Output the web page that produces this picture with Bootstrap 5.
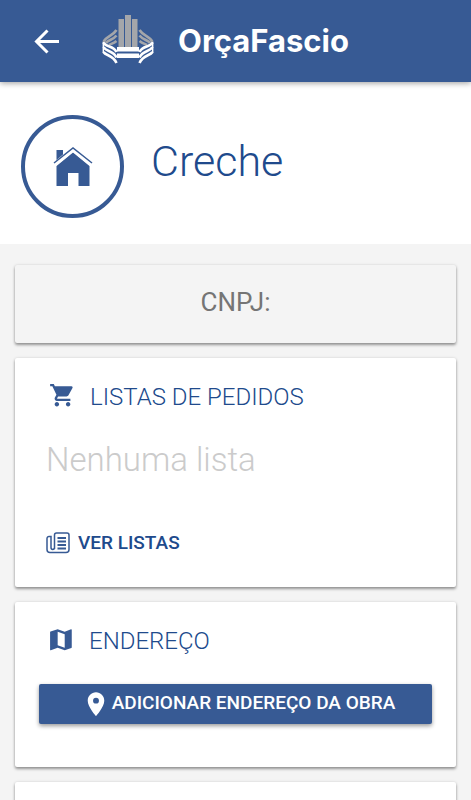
<!DOCTYPE html>
<html lang="pt-BR">
<head>
<meta charset="utf-8">
<meta name="viewport" content="width=device-width, initial-scale=1">
<title>OrçaFascio</title>
<link rel="stylesheet" href="https://cdn.jsdelivr.net/npm/bootstrap@5.3.0/dist/css/bootstrap.min.css">
<style>
:root { --brand: #375a94; --ink: #204a8c; }
body { background: #f4f4f4; font-family: Roboto, "Liberation Sans", sans-serif; overflow-x: hidden; }
svg { display: block; flex: none; }
.topbar { background: var(--brand); height: 82px; padding: 0 32px; box-shadow: 0 1px 6px rgba(0,0,0,.4); position: relative; z-index: 1; }
.back { margin-right: 40px; }
.brand-name { font: 700 31px/40px Inter, "Open Sans", sans-serif; color: #fff; margin-left: 24px; }
.hero { padding: 33px 21px 26px; gap: 27px; }
.hero-ring { width: 103px; height: 103px; border: 4px solid var(--brand); }
.hero h1 { font-size: 43px; line-height: 52px; font-weight: 300; color: var(--ink); margin-bottom: 12px; }
main { padding: 21px 15px; gap: 15px; }
.panel { border: 0; border-radius: 2px; box-shadow: 0 2px 3px rgba(0,0,0,.38), 0 0 3px rgba(0,0,0,.12); padding: 23px 24px 20px; }
.panel-flat { background: #f4f4f4; padding: 19px 24px 23px; }
.doc { font-size: 26px; line-height: 36px; color: #757575; }
.panel h2 { font-size: 24px; line-height: 32px; font-weight: 300; color: var(--ink); gap: 14px; padding-left: 10px; }
.empty { font-size: 33px; line-height: 44px; font-weight: 300; color: #cbcbcb; padding-left: 7px; margin: 25px 0 37px; }
.see { font-size: 19px; line-height: 28px; font-weight: 500; color: var(--ink); gap: 8px; padding: 10px 7px; }
.add { background: var(--brand); color: #fff; border-radius: 2px; height: 40px; font-size: 19px; line-height: 28px; font-weight: 500; gap: 5px; margin: 27px 0 23px; padding: 0 0 3px 9px; box-shadow: 0 2px 4px rgba(0,0,0,.4); }
.add:hover { background: #2d4c80; color: #fff; }
</style>
</head>
<body>
<header class="topbar d-flex align-items-center">
  <button type="button" class="btn border-0 p-0 back" aria-label="Voltar">
    <svg width="30" height="30" viewBox="0 0 30 30" fill="none" stroke="#fff" stroke-width="3"><path d="M27 15.500H5M15.500 4.500L4.500 15.500l11 11"/></svg>
  </button>
  <svg width="52" height="54" viewBox="0 0 52 54" aria-hidden="true">
    <path fill="#a4a6aa" d="M16.500 5h5.500v29h-5.500zM23 1h6v33h-6zM30 5h5.500v29h-5.500z"/>
    <g id="wing">
      <path fill="none" stroke="#a4a6aa" stroke-width="2.600" d="M1.500 28C4 22 11 22 14.500 16M4 29C6 26 11 26 14.500 21.500M7 31C9 30 12 29 14.500 27"/>
      <path fill="none" stroke="#fff" stroke-width="2.600" d="M1.500 28.500C4 34 11 31 14.500 38M1.500 33C4 38 11 36 14.500 43.500M1.500 38C4 42 11 41 14.500 49"/>
      <path stroke="#fff" stroke-width="1.400" d="M1.300 28v11"/>
    </g>
    <use href="#wing" transform="translate(52 0) scale(-1 1)"/>
    <path fill="#fff" d="M15 33h22v4.500H15zM15 39.500h22V44H15z"/>
  </svg>
  <span class="brand-name">OrçaFascio</span>
</header>

<section class="hero bg-white d-flex align-items-center">
  <div class="hero-ring rounded-circle d-flex align-items-center justify-content-center flex-shrink-0">
    <svg width="40" height="40" viewBox="0 0 40 40" aria-hidden="true">
      <path fill="#375a94" d="M3.500 3H10v4.500L3.500 13zM20 5.500L36.500 19v20H25.500V26H15v13H3.500V19z"/>
      <path fill="none" stroke="#fff" stroke-width="3" d="M1 18.500L20 3l19 15.500"/>
      <path fill="none" stroke="#375a94" stroke-width="1.500" d="M1 16L20 1l19 15"/>
    </svg>
  </div>
  <h1>Creche</h1>
</section>

<main class="d-flex flex-column">
  <section class="card panel panel-flat text-center"><div class="doc">CNPJ:</div></section>

  <section class="card panel align-items-start">
    <h2 class="d-flex align-items-center m-0">
      <svg width="27" height="27" viewBox="0 1 24 24" fill="#375a94" aria-hidden="true"><path transform="translate(0 -1)" d="M7 18c-1.100 0-1.990.9-1.990 2S5.900 22 7 22s2-.9 2-2-.9-2-2-2zM1 2v2h2l3.600 7.590-1.350 2.450c-.16.280-.25.610-.25.960 0 1.100.9 2 2 2h12v-2H7.420c-.14 0-.25-.11-.25-.25l.03-.12.900-1.630h7.450c.75 0 1.410-.41 1.750-1.030l3.580-6.490A1 1 0 0 0 20 4H5.210l-.94-2H1zm16 16c-1.100 0-1.990.9-1.990 2s.89 2 1.990 2 2-.9 2-2-.9-2-2-2z"/></svg>
      LISTAS DE PEDIDOS
    </h2>
    <p class="empty">Nenhuma lista</p>
    <button type="button" class="btn border-0 see d-flex align-items-center">
      <svg width="24" height="22" viewBox="0 0 24 22" fill="none" stroke="#375a94" stroke-width="1.500" aria-hidden="true"><path d="M8.500 17V3a2 2 0 0 1 2-2H21a2 2 0 0 1 2 2v14.500a3 3 0 0 1-3 3H4a3 3 0 0 1-3-3V6.500a2 2 0 0 1 2-2h2V15.500c0 2.500 3.500 2.500 3.500 0"/><path stroke-width="1.800" d="M11.500 6h8.500M11.500 9.500h8.500M11.500 13h8.500M11.500 16.500h8.500"/></svg>
      VER LISTAS
    </button>
  </section>

  <section class="card panel">
    <h2 class="d-flex align-items-center m-0">
      <svg width="26" height="26" viewBox="1 0 24 24" fill="#375a94" aria-hidden="true"><path d="M21.500 1.200l-.16.030L15.500 3.400 9 1.200 2.400 3.200c-.21.070-.4.250-.4.480V20c0 .28.220.5.500.5l.16-.03L9 18.200l6.500 2.300 6.100-2c.21-.07.400-.25.400-.48V1.700c0-.28-.22-.5-.5-.5zM15.500 18.200L9 15.900V3.500l6.500 2.200v12.500z"/></svg>
      ENDEREÇO
    </h2>
    <button type="button" class="btn add border-0 d-flex align-items-center justify-content-center">
      <svg width="22" height="26" viewBox="3 0 18 22" fill="#fff" aria-hidden="true"><path d="M12 2C8.130 2 5 5.130 5 9c0 5.250 7 13 7 13s7-7.750 7-13c0-3.870-3.130-7-7-7zm0 9.500a2.500 2.500 0 0 1 0-5 2.500 2.500 0 0 1 0 5z"/></svg>
      ADICIONAR ENDEREÇO DA OBRA
    </button>
  </section>

  <section class="card panel" aria-label="Mais informações"></section>
</main>
<script src="https://cdn.jsdelivr.net/npm/bootstrap@5.3.0/dist/js/bootstrap.bundle.min.js"></script>
</body>
</html>
